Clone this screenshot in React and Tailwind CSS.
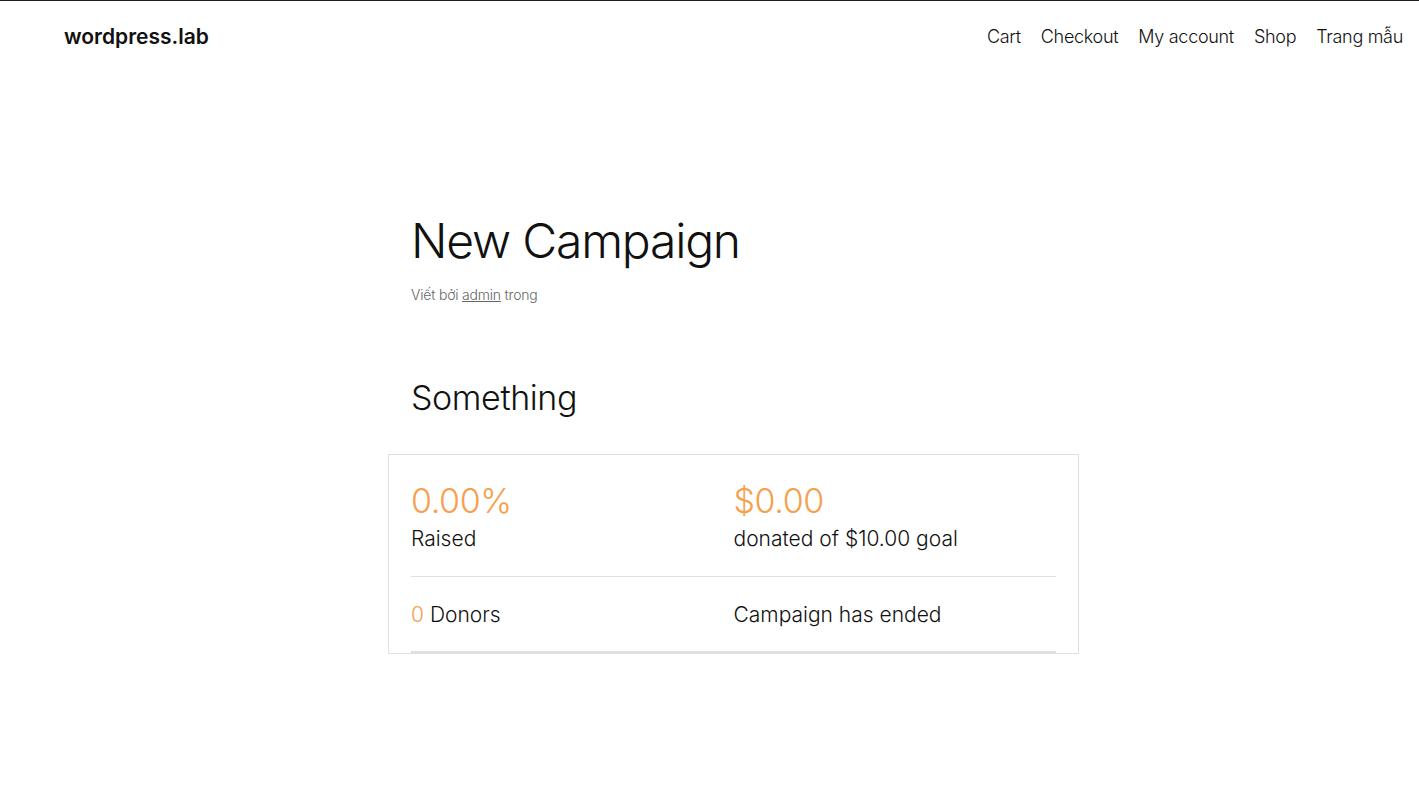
import React from "react"

const NAV = ["Cart", "Checkout", "My account", "Shop", "Trang mẫu"]

function Stat({ value, label }) {
  return (
    <div className="flex flex-col">
      <span className="text-[34px] leading-[40px] font-light tracking-[-0.4px] text-[#f6a04d]">{value}</span>
      <span className="mt-[2px] text-[21px] leading-[32px] font-light text-[#111]">{label}</span>
    </div>
  )
}

export default function App() {
  return (
    <div
      className="min-h-[805px] bg-white border-t border-[#1e1e1e] text-[#111]"
      style={{ fontFamily: "Inter, 'Noto Sans', sans-serif" }}
    >
      <header className="flex items-center justify-between pl-16 pr-4 h-[71px]">
        <a className="text-[21px] font-semibold text-[#111]">wordpress.lab</a>
        <nav className="flex items-center gap-5 text-[18px] font-light tracking-[-0.3px]">
          {NAV.map((n) => (
            <a key={n} className="text-[#111]">
              {n}
            </a>
          ))}
        </nav>
      </header>

      <div className="flex justify-center pl-[48px]">
        <main className="w-[645px] pt-[139px]">
          <h1 className="text-[48px] leading-[60px] font-light tracking-[-1.2px]">New Campaign</h1>
          <p className="mt-[13px] text-[14px] font-light text-[#666] tracking-[-0.2px]">
            Viết bởi <a className="underline">admin</a> trong
          </p>

          <h2 className="mt-[72px] text-[34px] leading-[42px] font-light tracking-[-0.4px]">Something</h2>

          <div className="mt-[35px] -mx-[23px] border border-[#e0e0e0] px-[22px]">
            <div className="grid grid-cols-2 pt-[26px] pb-[21px] border-b border-[#e0e0e0]">
              <Stat value="0.00%" label="Raised" />
              <Stat value="$0.00" label="donated of $10.00 goal" />
            </div>
            <div className="grid grid-cols-2 pt-[21px] pb-[19px] border-b-2 border-[#e0e0e0] text-[21px] leading-[34px] font-light">
              <div>
                <span className="text-[#f6a04d]">0</span> Donors
              </div>
              <div>Campaign has ended</div>
            </div>
          </div>
        </main>
      </div>
    </div>
  )
}
